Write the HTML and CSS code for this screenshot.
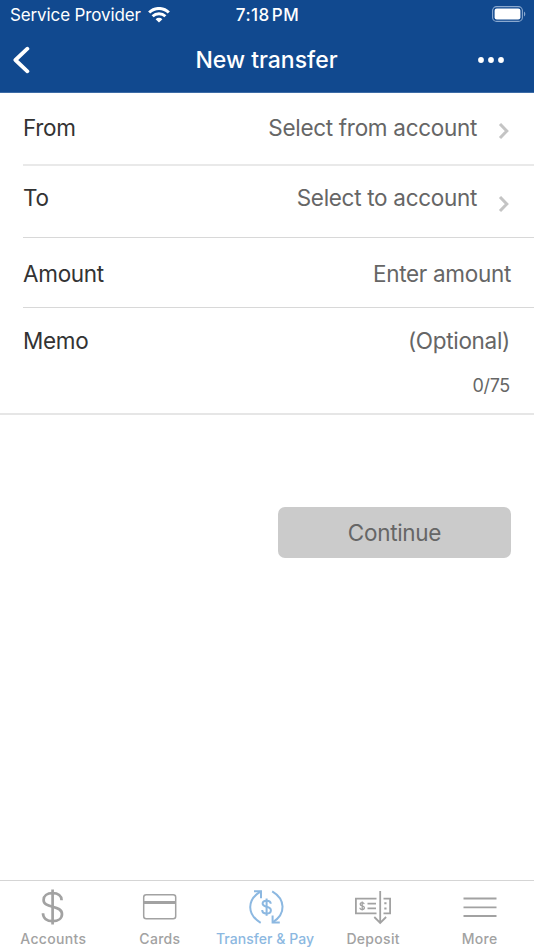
FILE: index.html
```html
<!DOCTYPE html>
<html lang="en">
<head>
    <meta charset="UTF-8">
    <meta name="viewport" content="width=device-width, initial-scale=1.0">
    <title>New transfer</title>
    <link rel="stylesheet" href="styles.css">
</head>
<body>
    <header class="header">
        <div class="status-bar">
            <div class="carrier">
                <span class="carrier-name">Service Provider</span>
                <svg class="wifi" width="22" height="16" viewBox="0 0 22 16" fill="none" stroke="#fff">
                    <path d="M1.2 5.5a14 14 0 0 1 19.6 0" stroke-width="3.1"/>
                    <path d="M4.6 9.3a9.2 9.2 0 0 1 12.8 0" stroke-width="2.9"/>
                    <path d="M11 15.6L7.6 12.2a4.9 4.9 0 0 1 6.8 0z" fill="#fff" stroke="none"/>
                </svg>
            </div>
            <span class="time">7:18&#8202;PM</span>
            <svg class="battery" width="34" height="16" viewBox="0 0 34 16">
                <rect x=".6" y=".6" width="29.8" height="14.8" rx="4" fill="none" stroke="#8ba9cf" stroke-width="1.1"/>
                <rect x="2.6" y="2.6" width="25.8" height="10.8" rx="2.2" fill="#fff"/>
                <path d="M32 5.5c1.7.8 1.7 4.2 0 5z" fill="#8ba9cf"/>
            </svg>
        </div>
        <div class="nav-bar">
            <button class="nav-button" aria-label="Back">
                <svg width="18" height="28" viewBox="0 0 18 28" fill="none" stroke="#fff" stroke-width="3.8" stroke-linecap="round" stroke-linejoin="round">
                    <path d="M15.4 2.7L3.4 14l12 11.3"/>
                </svg>
            </button>
            <h1 class="nav-title">New transfer</h1>
            <button class="nav-button nav-more" aria-label="Options">
                <svg width="28" height="8" viewBox="0 0 28 8" fill="#fff">
                    <circle cx="4" cy="4" r="2.9"/>
                    <circle cx="14" cy="4" r="2.9"/>
                    <circle cx="24" cy="4" r="2.9"/>
                </svg>
            </button>
        </div>
    </header>

    <main class="content">
        <div class="row row-from">
            <span class="label">From</span>
            <span class="value">Select from account</span>
            <svg class="chevron" width="12" height="18" viewBox="0 0 12 18">
                <path d="M2 2l6.8 7L2 16"/>
            </svg>
        </div>
        <div class="row row-to">
            <span class="label">To</span>
            <span class="value">Select to account</span>
            <svg class="chevron" width="12" height="18" viewBox="0 0 12 18">
                <path d="M2 2l6.8 7L2 16"/>
            </svg>
        </div>
        <div class="row row-amount">
            <span class="label">Amount</span>
            <span class="value">Enter amount</span>
        </div>
        <div class="row-memo">
            <div class="memo-line">
                <span class="label">Memo</span>
                <span class="value">(Optional)</span>
            </div>
            <div class="counter">0/75</div>
        </div>
        <button class="continue-button" disabled>Continue</button>
    </main>

    <nav class="tab-bar">
        <a class="tab">
            <svg class="tab-icon" width="36" height="36" viewBox="0 0 36 36" fill="none" stroke="#a2a2a2" stroke-width="2.7">
                <path d="M17.6 .5v35"/>
                <path d="M26.6 11.2c0-4.2-3.4-7-9-7s-9 2.8-9 6.8c0 4.2 3.8 5.4 9 6.7s9.4 2.7 9.4 7.3c0 4.4-3.8 7.2-9.4 7.2s-9.6-3-9.6-7.9"/>
            </svg>
            <span class="tab-label">Accounts</span>
        </a>
        <a class="tab">
            <svg class="tab-icon" width="36" height="36" viewBox="0 0 36 36" fill="none" stroke="#a2a2a2">
                <rect x="1.7" y="5.7" width="32" height="24" rx="2.5" stroke-width="1.5"/>
                <path d="M1.7 13.5h32" stroke-width="3"/>
            </svg>
            <span class="tab-label">Cards</span>
        </a>
        <a class="tab tab-active">
            <svg class="tab-icon" width="36" height="36" viewBox="0 0 36 36" fill="none" stroke="#8cb8e1" stroke-width="2">
                <path d="M12.7 33.8C-1 25.5-1.5 11 12.7 2.3"/>
                <path d="M6 2.2h7v7"/>
                <path d="M24.2 2.3c13.2 7.8 14.2 22.5.5 31"/>
                <path d="M31.8 33.6h-7.2v-7.2"/>
                <path d="M18.6 9.5v17.3"/>
                <path d="M22.7 14.7c0-1.9-1.6-3-4.1-3s-4 1.1-4 2.9c0 1.9 1.6 2.6 4 3.2s4.3 1.3 4.3 3.4-1.7 3.3-4.3 3.3-4.4-1.3-4.4-3.5"/>
            </svg>
            <span class="tab-label">Transfer &amp; Pay</span>
        </a>
        <a class="tab">
            <svg class="tab-icon" width="36" height="36" viewBox="0 0 36 36" fill="none" stroke="#a2a2a2" stroke-width="1.8">
                <path d="M21.5 9.7H.9v14.6h20.6"/>
                <path d="M28.5 9.7h6.6v14.6h-6.6"/>
                <path d="M25.2 2v31.5M19.3 28l5.9 6 5.9-6"/>
                <path d="M12.5 14.6h8.5M12.5 19.4h8.5"/>
                <path d="M29.3 14.3h2.2M29.3 19.5h2.2" stroke-width="2"/>
                <path d="M9.2 15.2c-.3-1.1-1-1.5-2-1.5-1.2 0-2 .6-2 1.6 0 2.3 4.2 1 4.2 3.4 0 1.1-.9 1.8-2.2 1.8s-2.2-.6-2.3-1.8M7.2 12.6v9" stroke-width="1.3"/>
            </svg>
            <span class="tab-label">Deposit</span>
        </a>
        <a class="tab">
            <svg class="tab-icon" width="36" height="36" viewBox="0 0 36 36" fill="none" stroke="#a2a2a2" stroke-width="1.8">
                <path d="M1.5 9.5h33M1.5 18.3h33M1.5 27h33"/>
            </svg>
            <span class="tab-label">More</span>
        </a>
    </nav>
</body>
</html>
```
FILE: styles.css
```css
* {
    box-sizing: border-box;
}
body {
    font-family: Inter, "Liberation Sans", sans-serif;
    margin: 0;
    height: 950px;
    display: flex;
    flex-direction: column;
    background-color: #fff;
    color: #333;
    overflow: hidden;
}
button {
    font-family: inherit;
    border: none;
    padding: 0;
    background: none;
}
svg {
    display: block;
}
.header {
    height: 93px;
    background-color: #11498f;
    border-bottom: 1px solid #3c6ba6;
    color: #fff;
}
.status-bar {
    display: grid;
    grid-template-columns: 1fr auto 1fr;
    height: 30px;
    padding: 0 8px 0 10px;
    align-items: center;
    line-height: 30px;
}
.carrier {
    display: flex;
    align-items: center;
    gap: 7px;
}
.carrier-name {
    font-size: 17px;
    letter-spacing: -0.12px;
}
.time {
    font-size: 17px;
    font-weight: 500;
    letter-spacing: 0.5px;
    margin-right: 1px;
}
.battery {
    justify-self: end;
    margin-bottom: 2px;
}
.nav-bar {
    display: grid;
    grid-template-columns: 60px 1fr 60px;
    align-items: center;
    height: 60px;
    padding: 0 29px 0 12px;
}
.nav-title {
    margin: 0;
    font-size: 23px;
    font-weight: 500;
    text-align: center;
    padding-left: 16px;
}
.nav-more {
    justify-self: end;
}
.content {
    flex: 1;
    display: flex;
    flex-direction: column;
}
.row {
    display: flex;
    margin-left: 23px;
    padding-right: 23px;
    border-bottom: 1px solid #d8d8d8;
    font-size: 22.5px;
    line-height: 30px;
    letter-spacing: -0.3px;
}
.row-from {
    height: 73px;
    padding-top: 20px;
    border-bottom: 2px solid #e9e9e9;
}
.row-to {
    height: 72px;
    padding-top: 17px;
}
.row-amount {
    height: 70px;
    padding-top: 21px;
}
.label {
    color: #333;
}
.value {
    color: #666;
    margin-left: auto;
}
.chevron {
    margin: 9px 1px 0 21px;
    fill: none;
    stroke: #c4c4c4;
    stroke-width: 3;
}
.row-to .chevron {
    margin-top: 12px;
}
.row-memo {
    height: 107px;
    padding: 18px 24px 0 23px;
    border-bottom: 2px solid #e6e6e6;
    font-size: 22.5px;
    line-height: 30px;
    letter-spacing: -0.3px;
}
.memo-line {
    display: flex;
}
.counter {
    margin-top: 15px;
    font-size: 18px;
    text-align: right;
    color: #666;
}
.continue-button {
    align-self: flex-end;
    width: 233px;
    height: 51px;
    margin: 92px 23px 0 0;
    border-radius: 7px;
    background-color: #cbcbcb;
    color: #666;
    font-size: 22.5px;
    letter-spacing: -0.3px;
}
.tab-bar {
    display: grid;
    grid-template-columns: repeat(5, 1fr);
    height: 70px;
    padding-right: 1px;
    border-top: 1px solid #d5d5d5;
}
.tab {
    display: flex;
    flex-direction: column;
    align-items: center;
    padding-top: 8px;
    color: #a2a2a2;
}
.tab-label {
    margin-top: 4px;
    font-size: 14px;
    line-height: 20px;
    font-weight: 500;
    letter-spacing: 0.3px;
    white-space: nowrap;
}
.tab-active {
    color: #8cb8e1;
}
.tab-active .tab-label {
    letter-spacing: 0.05px;
    margin-right: 3px;
}
```
